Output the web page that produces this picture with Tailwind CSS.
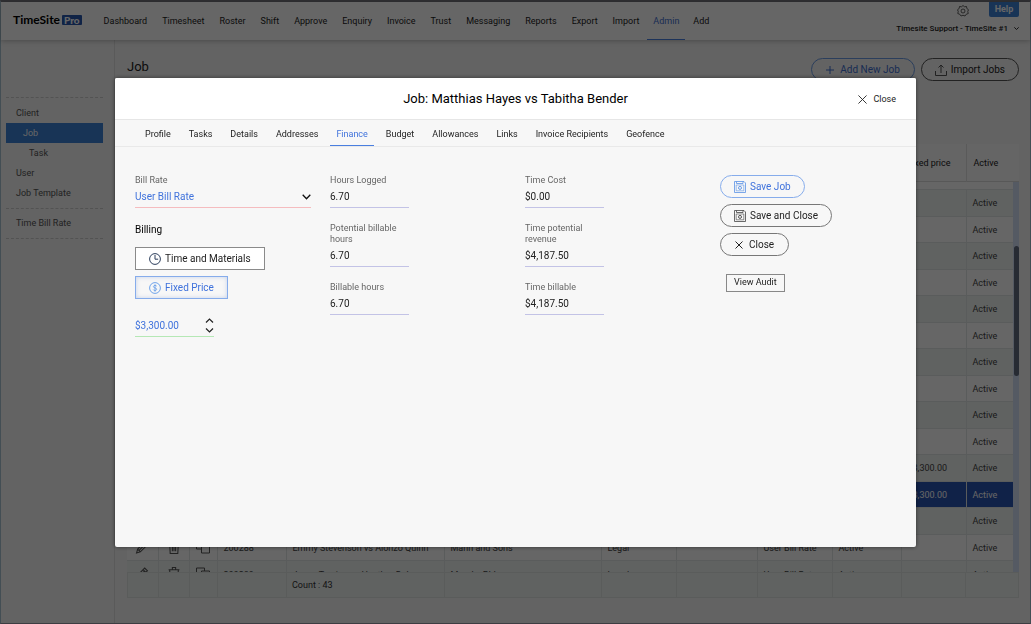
<!DOCTYPE html>
<html lang="en">
<head>
<meta charset="utf-8">
<title>TimeSite Pro</title>
<script src="https://cdn.jsdelivr.net/npm/@tailwindcss/browser@4"></script>
</head>
<body class="h-screen overflow-hidden bg-[#f7f7f7] font-['Roboto',sans-serif] text-[9px] text-[#222]">
<svg class="hidden" fill="none" stroke="currentColor">
  <symbol id="save" viewBox="0 0 12 12"><path d="M.5.5h9.500l1.500 1.500v9.500H.5zM2.500.5v2h6.500v-2" stroke-width=".8"/><path d="M2.200 9.800V4h7.600v5.800z" stroke-width=".6"/><circle cx="6" cy="6.900" r="1.500" stroke-width=".9"/></symbol>
  <symbol id="pencil" viewBox="0 0 12 12"><path d="M1 11l1-3.500L8.500 1l2.500 2.500L4.500 10zM2 7.500L4.500 10M7 2.500L9.500 5M3.500 8.500l5-5"/></symbol>
  <symbol id="trash" viewBox="0 0 12 12"><path d="M1 2.500h10M4.500 2.500v-2h3v2M2 2.500l.5 9h7l.5-9M4.500 4.500v5M6 4.500v5M7.500 4.500v5"/></symbol>
  <symbol id="copy" viewBox="0 0 14 12"><path d="M5.500 7.500H.5v-7h8v3M5.500 3.500h8v8h-8z"/></symbol>
</svg>

<div class="flex h-full flex-col border-x border-t-2 border-b border-x-[#a9c4d2] border-t-[#77777f] border-b-[#9a9aa6]">
  <header class="relative z-10 flex h-[38px] shrink-0 bg-white pl-3 shadow-[0_1px_5px_rgba(0,0,0,0.25)]">
    <a href="#" class="flex items-center gap-[2px] self-start pt-[12px] font-['Lato',sans-serif] text-[12px] leading-3 font-bold text-black">TimeSite<span class="rounded-[1px] bg-[#2857b0] px-[2px] text-[10px] leading-[10px] font-black text-white">Pro</span></a>
    <nav class="ml-[15px] flex gap-px">
      <a href="#" class="px-[7px] leading-[39px]">Dashboard</a>
      <a href="#" class="px-[7px] leading-[39px]">Timesheet</a>
      <a href="#" class="px-[7px] leading-[39px]">Roster</a>
      <a href="#" class="px-[7px] leading-[39px]">Shift</a>
      <a href="#" class="px-[7px] leading-[39px]">Approve</a>
      <a href="#" class="px-[7px] leading-[39px]">Enquiry</a>
      <a href="#" class="px-[7px] leading-[39px]">Invoice</a>
      <a href="#" class="px-[7px] leading-[39px]">Trust</a>
      <a href="#" class="px-[7px] leading-[39px]">Messaging</a>
      <a href="#" class="px-[7px] leading-[39px]">Reports</a>
      <a href="#" class="px-[7px] leading-[39px]">Export</a>
      <a href="#" class="px-[7px] leading-[39px]">Import</a>
      <a href="#" class="border-b border-[#4a7fe0] px-[6px] leading-[39px] text-[#3f6fd0]">Admin</a>
      <a href="#" class="px-[7px] leading-[39px]">Add</a>
    </nav>
    <div class="ml-auto flex flex-col items-end pr-[11px]">
      <div class="flex items-start gap-5">
        <button aria-label="Settings" class="pt-[3px]"><svg class="size-3" viewBox="0 0 24 24" fill="none" stroke="#333" stroke-width="1.500"><circle cx="12" cy="12" r="4"/><path d="M12 1l3 2.500 4-.5.700 4L23 9.500 21.500 13l1 4-4 1.500L16 22l-4-1.500L8 22l-2.500-3.500-4-1.500 1-4L1 9.500 4.300 7 5 3l4 .5z"/></svg></button>
        <button class="h-[15px] w-[30px] rounded-b-[2px] bg-[#3c82d8] text-[9px] font-bold text-white">Help</button>
      </div>
      <button class="flex items-center gap-[6px] pt-[6px] text-[8px] leading-3 font-medium">Timesite Support - TimeSite #1<svg class="w-[5px]" viewBox="0 0 8 5" fill="none" stroke="#222" stroke-width="1.500"><path d="M.5.5L4 4 7.500.5"/></svg></button>
    </div>
  </header>

  <div class="flex min-h-0 flex-1">
    <aside class="w-[114px] shrink-0 border-r border-[#e2e2e2] pt-[57px] pr-[11px] pl-[5px] text-[#555]">
      <nav class="flex flex-col border-y border-dashed border-[#cfcfcf] pt-[5px] pb-[5px] leading-5">
        <a href="#" class="pl-[10px]">Client</a>
        <a href="#" class="bg-[#3c82d8] pl-[17px] text-white">Job</a>
        <a href="#" class="pl-[23px]">Task</a>
        <a href="#" class="pl-[10px]">User</a>
        <a href="#" class="pl-[10px]">Job Template</a>
      </nav>
      <nav class="flex flex-col border-b border-dashed border-[#cfcfcf] leading-[29px]">
        <a href="#" class="pl-[10px]">Time Bill Rate</a>
      </nav>
    </aside>

    <main class="flex min-w-0 flex-1 flex-col pt-[18px] pr-[11px] pb-[25px] pl-3">
      <div class="flex shrink-0 justify-between">
        <h1 class="text-[13px] leading-[18px]">Job</h1>
        <div class="flex gap-[6px] text-[10px]">
          <button class="flex h-[23px] items-center gap-[6px] rounded-full border border-[#6b9be6] px-[14px] text-[#3f6fd0]"><svg class="size-[8px]" viewBox="0 0 8 8" stroke="currentColor"><path d="M4 0v8M0 4h8"/></svg>Add New Job</button>
          <button class="flex h-[23px] items-center gap-[4px] rounded-full border border-[#555] px-[13px]"><svg class="size-[12px]" viewBox="0 0 12 12" fill="none" stroke="#555"><path d="M.5 7v4.500h11V7M6 9V1M3.500 3.500L6 1l2.500 2.500"/></svg>Import Jobs</button>
        </div>
      </div>
      <table class="mt-[63px] w-full shrink-0 table-fixed border-collapse bg-[#fcfcfc]">
        <colgroup><col><col class="w-[65px]"><col class="w-[53px]"></colgroup>
        <thead><tr class="h-[37px] border-b border-[#ddd]"><th></th><th class="pt-[2px] pr-[15px] text-right font-normal whitespace-nowrap">Fixed price</th><th class="border-l border-[#e0e0e0] pt-[2px] pl-[7px] text-left font-normal">Active</th></tr></thead>
      </table>
      <div class="flex min-h-0 flex-1">
        <div class="min-w-0 flex-1 overflow-hidden bg-white pt-[7px]">
          <table class="w-full table-fixed border-collapse text-[#444]">
            <colgroup><col class="w-[31px]"><col class="w-[31px]"><col class="w-[28px]"><col class="w-[69px]"><col class="w-[158px]"><col class="w-[157px]"><col class="w-[75px]"><col class="w-[81px]"><col class="w-[75px]"><col class="w-[69px]"><col><col class="w-[47px]"></colgroup>
            <tbody id="rows"></tbody>
          </table>
        </div>
        <div class="w-[6px] bg-[#d5e1f8] pt-[64px]"><div class="ml-px h-[130px] rounded-full bg-[#626c80]"></div></div>
      </div>
      <table class="w-full shrink-0 table-fixed border-collapse bg-[#f0f5f3]">
        <colgroup><col class="w-[31px]"><col class="w-[31px]"><col class="w-[28px]"><col class="w-[69px]"><col class="w-[158px]"><col class="w-[157px]"><col class="w-[75px]"><col class="w-[81px]"><col class="w-[75px]"><col class="w-[69px]"><col><col class="w-[53px]"></colgroup>
        <tfoot><tr id="totals" class="h-[25px] border border-[#e0e6e4]"></tr></tfoot>
      </table>
    </main>
  </div>
</div>

<div class="fixed inset-0 z-20 flex bg-black/60 px-[115px] pt-[78px] pb-[77px]">
  <section role="dialog" aria-labelledby="title" class="flex min-w-0 flex-1 flex-col overflow-hidden rounded-[2px] bg-[#f7f7f7] shadow-[0_0_4px_rgba(0,0,0,0.5)]">
    <div class="relative flex h-[42px] shrink-0 items-center justify-center border-b border-[#e6e6e6] bg-white pt-px">
      <h2 id="title" class="text-[13px] text-black">Job: Matthias Hayes vs Tabitha Bender</h2>
      <button class="absolute right-5 flex items-center gap-[6px] leading-4"><svg class="size-[9px]" viewBox="0 0 10 10" stroke="#222"><path d="M.5.5l9 9M9.500.5l-9 9"/></svg>Close</button>
    </div>
    <nav class="flex h-[27px] shrink-0 gap-[6px] border-b border-[#e9e9e9] pl-6 leading-[28px]">
      <a href="#" class="px-[6px]">Profile</a>
      <a href="#" class="px-[6px]">Tasks</a>
      <a href="#" class="px-[6px]">Details</a>
      <a href="#" class="px-[6px]">Addresses</a>
      <a href="#" class="border-b border-[#4a7fe0] px-[6px] text-[#3f72dc]">Finance</a>
      <a href="#" class="px-[6px]">Budget</a>
      <a href="#" class="px-[6px]">Allowances</a>
      <a href="#" class="px-[6px]">Links</a>
      <a href="#" class="px-[6px]">Invoice Recipients</a>
      <a href="#" class="px-[6px]">Geofence</a>
    </nav>
    <form class="grid grid-cols-4 pt-[28px] pr-px pl-5 text-[10px]">
      <div class="flex flex-col items-start pr-[19px]">
        <label for="rate" class="text-[9px] leading-[11px] text-[#666]">Bill Rate</label>
        <div class="relative w-full">
          <select id="rate" class="h-[22px] w-full appearance-none border-b border-[#f5bcbf] text-[#3f72dc]"><option>User Bill Rate</option></select>
          <svg class="pointer-events-none absolute top-[8px] right-0 w-[9px]" viewBox="0 0 9 6" fill="none" stroke="#111" stroke-width="1.300"><path d="M.7.7l3.800 4 3.800-4"/></svg>
        </div>
        <h3 class="mt-[15px] leading-[14px] text-black">Billing</h3>
        <button type="button" class="mt-[10px] flex h-[23px] items-center gap-[4px] border border-[#8a8a8a] bg-white px-[13px]"><svg class="size-[12px]" viewBox="0 0 12 12" fill="none" stroke="#2c3e5c"><circle cx="6" cy="6" r="5.400"/><path d="M6 2v4.200h3.200"/></svg>Time and Materials</button>
        <button type="button" class="mt-[6px] flex h-[23px] items-center gap-[4px] border border-[#86aceb] px-[13px] text-[#3f72dc] shadow-[inset_0_0_4px_rgba(80,120,200,0.3)]"><svg class="size-[12px]" viewBox="0 0 12 12" fill="none" stroke="#6fa3ea"><circle cx="6" cy="6" r="5.400"/><path d="M7.700 4.200Q7.300 3.400 6 3.400T4.400 4.600Q4.400 5.600 6 5.900T7.700 7.300Q7.500 8.500 6 8.500T4.200 7.500M6 2.300v7.400" stroke-width=".9"/></svg>Fixed Price</button>
        <div class="mt-[15px] flex w-[79px] items-center justify-between border-b border-[#b5e8b5]">
          <input aria-label="Fixed price" value="$3,300.00" class="h-[22px] w-[60px] text-[#3f72dc]">
          <svg class="h-[15px] w-[9px]" viewBox="0 0 9 15" fill="none" stroke="#222" stroke-width="1.200"><path d="M1 4.500L4.500 1 8 4.500M1 10.500L4.500 14 8 10.500"/></svg>
        </div>
      </div>
      <div class="flex w-[79px] flex-col gap-[15px]">
        <div><label for="a" class="block text-[9px] leading-[11px] text-[#666]">Hours Logged</label><input id="a" readonly value="6.70" class="block h-[22px] w-full border-b border-[#c3c3e6]"></div>
        <div><label for="b" class="block text-[9px] leading-[11px] text-[#666]">Potential billable hours</label><input id="b" readonly value="6.70" class="block h-[22px] w-full border-b border-[#c3c3e6]"></div>
        <div><label for="c" class="block text-[9px] leading-[11px] text-[#666]">Billable hours</label><input id="c" readonly value="6.70" class="block h-[22px] w-full border-b border-[#c3c3e6]"></div>
      </div>
      <div class="flex w-[79px] flex-col gap-[15px]">
        <div><label for="d" class="block text-[9px] leading-[11px] text-[#666]">Time Cost</label><input id="d" readonly value="$0.00" class="block h-[22px] w-full border-b border-[#c3c3e6]"></div>
        <div><label for="e" class="block text-[9px] leading-[11px] text-[#666]">Time potential revenue</label><input id="e" readonly value="$4,187.50" class="block h-[22px] w-full border-b border-[#c3c3e6]"></div>
        <div><label for="f" class="block text-[9px] leading-[11px] text-[#666]">Time billable</label><input id="f" readonly value="$4,187.50" class="block h-[22px] w-full border-b border-[#c3c3e6]"></div>
      </div>
      <div class="flex flex-col items-start gap-[6px]">
        <button type="button" class="flex h-[23px] items-center gap-[4px] rounded-full border border-[#86aceb] px-[13px] text-[#3f72dc]"><svg class="size-[12px]" fill="none" stroke="#5a92e4"><use href="#save"/></svg>Save Job</button>
        <button type="button" class="flex h-[23px] items-center gap-[4px] rounded-full border border-[#777] px-[13px]"><svg class="size-[12px]" fill="none" stroke="#444"><use href="#save"/></svg>Save and Close</button>
        <button type="button" class="flex h-[23px] items-center gap-[6px] rounded-full border border-[#777] px-[14px]"><svg class="size-[8px]" viewBox="0 0 8 8" stroke="#222"><path d="M.5.5l7 7M7.500.5l-7 7"/></svg>Close</button>
        <button type="button" class="mt-[12px] ml-[6px] h-[18px] border border-[#888] px-[7px] text-[9px]">View Audit</button>
      </div>
    </form>
  </section>
</div>

<script>
const jobs = Array.from({ length: 15 }, () => ['', '', '', '', '', '', '', 'Active']);
jobs[10][6] = jobs[11][6] = '$3,300.00';
jobs[13] = ['200288', 'Emmy Stevenson vs Alonzo Quinn', 'Mann and Sons', 'Legal', '', 'User Bill Rate', 'Active', '', 'Active'];
jobs[14] = ['200289', 'Jovan Trevino vs Heather Duke', 'Murphy PLL', 'Legal', '', 'User Bill Rate', 'Active', '', 'Active'];
const icon = id => `<td class="border-r border-[#e2e6e5]"><svg class="mx-auto h-[13px] w-[14px]" fill="none" stroke="#555"><use href="#${id}"/></svg></td>`;
document.getElementById('rows').innerHTML = jobs.map((job, i) => {
  const cells = job.length === 8 ? ['', ...job] : job;
  const tone = i === 11 ? 'bg-[#2a56b4] text-white' : i % 2 ? 'bg-white' : 'bg-[#f0f5f3]';
  const height = i % 2 ? 'h-[26px]' : 'h-[27px]';
  return `<tr class="border-t border-[#e2e6e5] ${tone} ${height}">${icon('pencil')}${icon('trash')}${icon('copy')}` +
    cells.map(c => `<td class="overflow-hidden border-r border-[#e2e6e5] pt-[3px] pl-[6px] whitespace-nowrap last:border-r-0">${c}</td>`).join('') + '</tr>';
}).join('');
document.getElementById('totals').innerHTML = Array.from({ length: 12 }, (_, i) =>
  `<td class="border-r border-[#e0e6e4] pt-[2px] pl-[5px] text-[#333]">${i === 4 ? 'Count : 43' : ''}</td>`).join('');
</script>
</body>
</html>
